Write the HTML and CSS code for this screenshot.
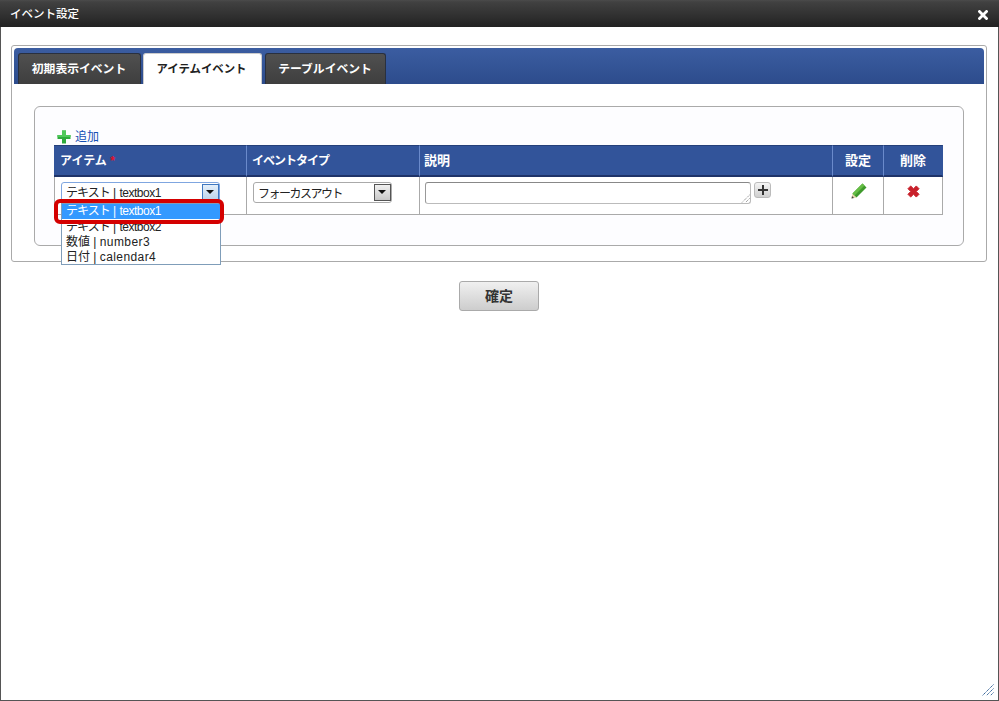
FILE: index.html
```html
<!DOCTYPE html>
<html lang="ja">
<head>
<meta charset="utf-8">
<title>イベント設定</title>
<link rel="stylesheet" href="styles.css">
</head>
<body>
<div class="dialog">
  <header class="titlebar">
    <span class="title">イベント設定</span>
    <svg class="close" width="10" height="10" viewBox="0 0 10 10"><path d="M1.5 1.5L8.5 8.5M8.5 1.5L1.5 8.5" stroke="#fff" stroke-width="2.8" stroke-linecap="square" fill="none"/></svg>
  </header>
  <main class="content">
    <section class="panel">
      <nav class="tabbar">
        <span class="tab">初期表示イベント</span>
        <span class="tab active">アイテムイベント</span>
        <span class="tab">テーブルイベント</span>
      </nav>
      <div class="inner">
        <a class="add">
          <svg width="14" height="14" viewBox="0 0 14 14"><path d="M5 0.5H9V5H13.5V9H9V13.5H5V9H0.5V5H5Z" fill="#2eab3c"/><path d="M5 0.5H9V5H13.5V7H0.5V5H5Z" fill="#4fc95a"/></svg>
          <span>追加</span>
        </a>
        <table class="grid">
          <thead>
            <tr>
              <th class="c1">アイテム <em>*</em></th>
              <th class="c2">イベントタイプ</th>
              <th class="c3">説明</th>
              <th class="c4">設定</th>
              <th class="c5">削除</th>
            </tr>
          </thead>
          <tbody>
            <tr>
              <td class="first">
                <div class="select focused">
                  <span class="value"><span class="kana">テキスト</span> | <span class="tight">textbox1</span></span>
                  <span class="arrow"></span>
                </div>
              </td>
              <td>
                <div class="select type">
                  <span class="value">フォーカスアウト</span>
                  <span class="arrow"></span>
                </div>
              </td>
              <td class="third">
                <div class="desc">
                  <div class="textarea">
                    <svg class="grip" width="9" height="9" viewBox="0 0 9 9"><path d="M8.5 1L1 8.5M8.5 4.5L4.5 8.5" stroke="#777" stroke-width="1" stroke-dasharray="1 1" fill="none"/></svg>
                  </div>
                  <span class="plus">
                    <svg width="10" height="10" viewBox="0 0 10 10"><path d="M4 0H6V4H10V6H6V10H4V6H0V4H4Z" fill="#333"/></svg>
                  </span>
                </div>
              </td>
              <td class="icon edit">
                <svg width="16" height="16" viewBox="0 0 16 16"><path d="M0.5 15.5L1.5 10.5L5.5 14.5Z" fill="#e3d3a8"/><path d="M0.5 15.5L1 13L3 15Z" fill="#444"/><path d="M1.5 10.5L11.5 0.5L15.5 4.5L5.5 14.5Z" fill="#3f9a2c"/><path d="M1.5 10.5L11.5 0.5L13.5 2.5L3.5 12.5Z" fill="#66bd45"/></svg>
              </td>
              <td class="icon del">
                <svg width="13" height="13" viewBox="0 0 14 14"><path d="M1 4L4 1L7 4L10 1L13 4L10 7L13 10L10 13L7 10L4 13L1 10L4 7Z" fill="#c8202a" stroke="#c8202a" stroke-width="1" stroke-linejoin="round"/></svg>
              </td>
            </tr>
          </tbody>
        </table>
        <ul class="options">
          <li class="hl"><span class="kana">テキスト</span> | <span class="tight">textbox1</span></li>
          <li><span class="kana">テキスト</span> | <span class="tight">textbox2</span></li>
          <li>数値 | <span class="wide">number3</span></li>
          <li>日付 | <span class="wide">calendar4</span></li>
        </ul>
        <div class="callout"></div>
      </div>
    </section>
    <div class="actions"><button class="confirm" type="button">確定</button></div>
  </main>
  <svg class="resize" width="12" height="12" viewBox="0 0 12 12"><path d="M11.5 0.5L0.5 11.5M11.5 4.5L4.5 11.5M11.5 8.5L8.5 11.5" stroke="#2f5f95" stroke-width="1" stroke-dasharray="1.4 0.6" fill="none"/></svg>
</div>
</body>
</html>
```
FILE: styles.css
```css
* { box-sizing: border-box; }
html, body { margin: 0; padding: 0; height: 100%; }
body {
  font-family: "Liberation Sans", "Noto Sans CJK JP", sans-serif;
  font-size: 12px;
  color: #222;
  background: #fff;
  overflow: hidden;
}
.kana { letter-spacing: -1px; }
.tight { letter-spacing: -0.5px; }
.wide { letter-spacing: 0.4px; }
.dialog {
  position: relative;
  width: 999px;
  height: 701px;
  border: 1px solid #555;
  border-top: 0;
  background: #fff;
  display: flex;
  flex-direction: column;
}
.titlebar {
  height: 27px;
  margin: 0 -1px;
  padding: 0 11px 1px 10px;
  display: flex;
  align-items: center;
  justify-content: space-between;
  background: linear-gradient(#4b4b4b 0, #414141 2px, #222 100%);
  color: #fff;
  font-size: 11.5px;
  font-weight: 500;
}
.close { display: block; margin-top: 4px; }
.content { flex: 1; padding: 18px 11px 0 10px; }
.panel {
  height: 217px;
  border: 1px solid #aaa;
  border-radius: 3px;
  padding: 2px;
}
.tabbar {
  height: 36px;
  padding: 5px 0 0 4px;
  display: flex;
  gap: 2px;
  border-radius: 4px 4px 0 0;
  background: linear-gradient(#3b5da1, #2d4c8c);
}
.tab {
  height: 31px;
  width: 123px;
  display: flex;
  align-items: center;
  justify-content: center;
  padding: 0 1px 3px 0;
  border: 1px solid #29303f;
  border-bottom: 0;
  border-radius: 3px 3px 0 0;
  background: linear-gradient(#505050, #3e3e3e);
  color: #fff;
  font-weight: bold;
  font-size: 11.8px;
}
.tab.active {
  width: 119px;
  padding-right: 2px;
  background: #fff;
  border-color: #ccc;
  color: #222;
  font-size: 11.4px;
}
.tab:last-child { width: 121px; margin-left: 1px; }
.inner {
  position: relative;
  margin: 22px 20px 0;
  height: 140px;
  padding: 21px 19px 0;
  border: 1px solid #aaa;
  border-radius: 6px;
  background: #fdfdff;
}
.add {
  height: 17px;
  display: flex;
  align-items: center;
  gap: 4px;
  padding: 0 0 2px 3px;
  color: #1450b4;
  font-size: 12px;
}
.add svg { margin-top: 2px; }
.grid {
  width: 889px;
  table-layout: fixed;
  border-collapse: separate;
  border-spacing: 0;
  background: #fff;
}
.c1 { width: 193px; }
.c2 { width: 173px; }
.c3 { width: 413px; }
.c4 { width: 51px; }
.c5 { width: 59px; }
.grid th {
  height: 32px;
  padding: 0 5px 3px;
  text-align: left;
  color: #fff;
  font-size: 12px;
  font-weight: bold;
  background: #32549a;
  border-top: 1px solid #25407a;
  border-bottom: 2px solid #1e3368;
  border-right: 1px solid #6a8acb;
}
.grid th.c2 { letter-spacing: -1px; }
.grid th.c1 { padding-left: 6px; }
.grid th.c3 { font-size: 13px; padding-left: 4px; }
.grid th:last-child { border-right: 1px solid #32549a; }
.grid th.c4, .grid th.c5 { font-size: 13px; text-align: center; padding-left: 0; padding-right: 0; }
.grid th em { color: #e0102a; font-style: normal; }
.grid td {
  height: 38px;
  padding: 5px 6px 0 6px;
  vertical-align: top;
  border-right: 1px solid #aaa;
  border-bottom: 1px solid #aaa;
}
.grid td.first { border-left: 1px solid #aaa; padding-left: 6px; }
.grid td.third { padding-left: 5px; }
.select {
  position: relative;
  width: 159px;
  height: 21px;
  display: flex;
  align-items: center;
  padding-left: 4px;
  background: #fff;
  border: 1px solid #aaa;
  border-radius: 3px;
  color: #222;
  font-size: 12px;
}
.select.focused { border-color: #7fa6e0; padding-bottom: 3px; }
.select.type { width: 139px; letter-spacing: -1.5px; }
.arrow {
  position: absolute;
  top: 1px;
  right: 0;
  width: 17px;
  height: 17px;
  border: 1px solid #555;
  background: linear-gradient(#f0f0f0, #c8c8c8);
}
.focused .arrow { border-color: #3f78c0; background: linear-gradient(#e4effa, #bcd3ea); }
.arrow::after {
  content: "";
  position: absolute;
  left: 3px;
  top: 5px;
  border: 4px solid transparent;
  border-top: 4px solid #111;
  border-bottom: 0;
}
.desc { display: flex; align-items: flex-start; gap: 3px; }
.textarea {
  position: relative;
  width: 326px;
  height: 22px;
  background: #fff;
  border: 1px solid #bbb;
  border-top-color: #888;
  border-left-color: #999;
  border-radius: 3px;
}
.grip { position: absolute; right: 0; bottom: 0; }
.plus {
  width: 17px;
  height: 16px;
  display: flex;
  align-items: center;
  justify-content: center;
  border: 1px solid #bbb;
  border-radius: 3px;
  background: linear-gradient(#f4f4f4, #cfcfcf);
}
.grid td.icon { text-align: center; padding: 6px 0 0; }
.grid td.edit { padding-left: 2px; }
.icon svg { display: block; margin: 0 auto; }
.del svg { margin-top: 2px; }
.options {
  position: absolute;
  left: 26px;
  top: 96px;
  width: 160px;
  margin: 0;
  padding: 0;
  list-style: none;
  background: #fff;
  border: 1px solid #7f9db9;
  color: #222;
  font-size: 12px;
  line-height: 15px;
}
.options li { height: 15px; padding-left: 4px; white-space: nowrap; }
.options li.hl { background: #3399ff; color: #fff; }
.options li:not(.hl) { line-height: 16px; }
.callout {
  position: absolute;
  left: 19px;
  top: 92px;
  width: 170px;
  height: 25px;
  border: 4px solid #d40000;
  border-radius: 6px;
}
.actions { display: flex; justify-content: center; padding-top: 19px; }
.confirm {
  width: 80px;
  height: 30px;
  padding: 0 0 2px;
  border: 1px solid #aaa;
  border-radius: 3px;
  background: linear-gradient(#f0f0f0, #cdcdcd);
  color: #333;
  font-family: inherit;
  font-size: 14px;
  font-weight: bold;
}
.resize { position: absolute; right: 4px; bottom: 4px; }
```
